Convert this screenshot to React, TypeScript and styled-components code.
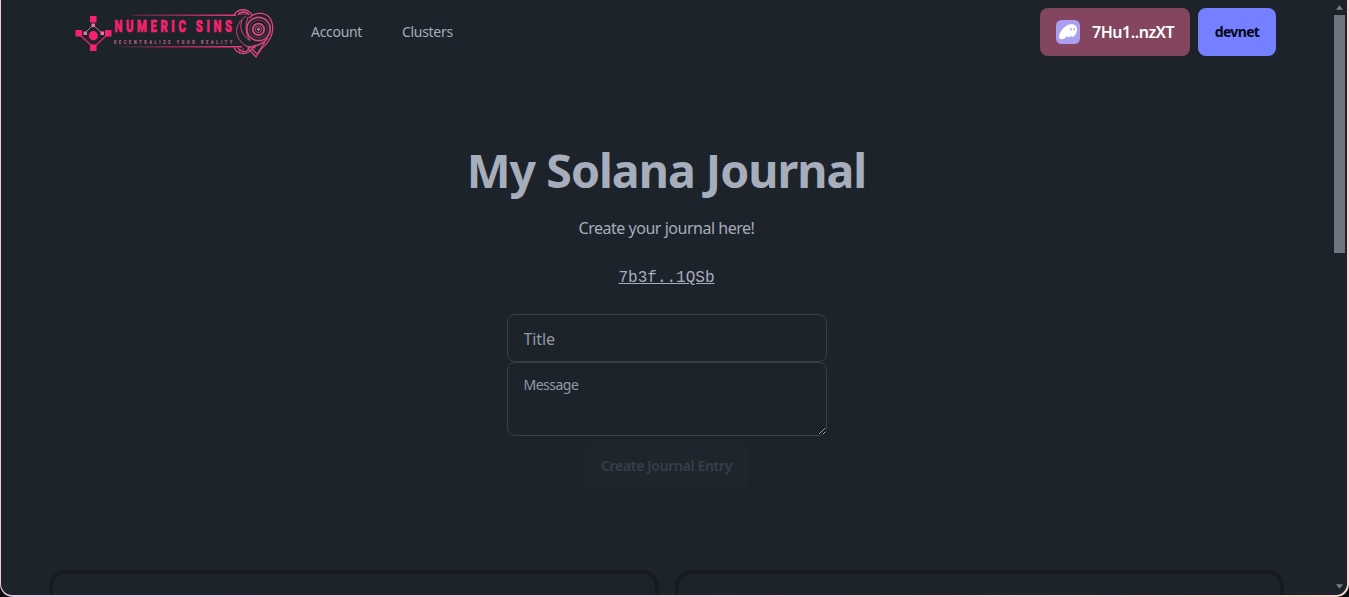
import React from 'react';
import styled, { createGlobalStyle } from 'styled-components';

const Global = createGlobalStyle`
  *, *::before, *::after { box-sizing: border-box; }
  html, body { margin: 0; background: #0b0a0d; }
  body { font-family: "Noto Sans", "Open Sans", sans-serif; color: #a6adbb; overflow: hidden; }
`;
const Frame = styled.div`
  height: 597px;
  padding: 0 2px 2px 1px;
  border-radius: 0 0 13px 13px;
  background: linear-gradient(90deg, #e9c9e4, #f0c9d8 50%, #f8d4cc);
  overflow: hidden;
`;
const Viewport = styled.div`
  height: 595px;
  display: flex;
  background: #1d232a;
  border-radius: 0 0 11px 11px;
  overflow: hidden;
`;
const Page = styled.div`
  flex: 1;
  min-width: 0;
  display: flex;
  flex-direction: column;
`;
const Scrollbar = styled.div`
  width: 15px;
  flex: none;
  display: flex;
  flex-direction: column;
  justify-content: space-between;
  align-items: center;
  padding: 5px 2px 6px 2px;
`;
const Thumb = styled.div`
  width: 11px;
  height: 238px;
  margin: 5px 0 auto;
  background: #6f7480;
`;
const Header = styled.header`
  height: 64px;
  flex: none;
  display: flex;
  align-items: center;
  justify-content: space-between;
  padding: 0 56px 0 71px;
`;
const Row = styled.div<{ $gap: number }>`
  display: flex;
  align-items: center;
  gap: ${p => p.$gap}px;
`;
const NavLink = styled.a<{ $width: number }>`
  width: ${p => p.$width}px;
  font-size: 14px;
  line-height: 20px;
  letter-spacing: -0.3px;
  white-space: nowrap;
`;
const Wallet = styled.button`
  width: 150px;
  height: 48px;
  display: flex;
  align-items: center;
  gap: 12px;
  padding: 0 0 0 16px;
  border: 0;
  border-radius: 8px;
  background: #84465f;
  color: #fff;
  font: 600 16px "Noto Sans", sans-serif;
  letter-spacing: -0.45px;
`;
const Cluster = styled.button`
  width: 78px;
  height: 48px;
  padding: 0 0 1px;
  border: 0;
  border-radius: 8px;
  background: #7480ff;
  color: #050617;
  font: 700 14px "Noto Sans", sans-serif;
  letter-spacing: -0.65px;
`;
const Hero = styled.main`
  height: 506px;
  flex: none;
  display: flex;
  flex-direction: column;
  align-items: center;
  padding-top: 82px;
`;
const Title = styled.h1`
  margin: 0;
  font-size: 46.5px;
  line-height: 48px;
  font-weight: 700;
  letter-spacing: -1px;
  white-space: nowrap;
`;
const Lead = styled.p`
  margin: 22px 0 0;
  font-size: 16px;
  line-height: 24px;
  letter-spacing: -0.48px;
`;
const Address = styled.a`
  margin-top: 26px;
  font: 16px/24px "Liberation Mono", monospace;
  text-decoration: underline;
`;
const Form = styled.form`
  margin-top: 24px;
  display: flex;
  flex-direction: column;
  align-items: center;
`;
const Input = styled.input`
  width: 320px;
  height: 48px;
  padding: 2px 16px 0;
  border: 1px solid #383f47;
  border-radius: 8px;
  background: transparent;
  font: 16px "Noto Sans", sans-serif;
  letter-spacing: -0.1px;
  &::placeholder { color: #9299a5; opacity: 1; }
`;
const TextArea = styled.textarea`
  display: block;
  width: 320px;
  height: 74px;
  padding: 12px 16px 8px;
  border: 1px solid #383f47;
  border-radius: 8px;
  background: transparent;
  color-scheme: dark;
  font: 14px/20px "Noto Sans", sans-serif;
  letter-spacing: -0.5px;
  &::placeholder { color: #9299a5; opacity: 1; }
`;
const Submit = styled.button`
  width: 165px;
  height: 48px;
  margin-top: 6px;
  padding: 0 0 1px;
  border: 0;
  border-radius: 8px;
  background: #1f252d;
  color: #373e47;
  font: 600 14px "Noto Sans", sans-serif;
  letter-spacing: -0.32px;
`;
const Cards = styled.div`
  display: grid;
  grid-template-columns: 610px 609px;
  gap: 16px;
  padding-left: 48px;
`;
const Card = styled.article`
  height: 100px;
  border: 4px solid #171b20;
  border-radius: 16px;
`;

const Logo = () => (
  <svg width="204" height="56" viewBox="72 4 204 56" fill="none">
    <defs>
      <linearGradient id="rule" x1="115" x2="240" y1="0" y2="0" gradientUnits="userSpaceOnUse">
        <stop stopColor="#ee2a75" stopOpacity="0" />
        <stop offset=".6" stopColor="#a52a5c" />
        <stop offset="1" stopColor="#f23a80" />
      </linearGradient>
    </defs>
    <path d="m80 35 12 11h3l12-11" stroke="#e0246c" strokeWidth="1.3" />
    <path d="m93 25-8 8m8-8 9 8" stroke="#d76b9a" />
    <g fill="#f5226f">
      <path d="M90 16h6.500v6.500H90zM75.500 30h6.500v6.500h-6.500zM105 30h6.500v6.500H105zM90 44.500h6.500V51H90z" />
      <circle cx="93.300" cy="35.700" r="4.600" />
    </g>
    <path d="M91.500 23.500h3.500v3.500h-3.500zM83.500 31.500h3.500V35h-3.500zM100.500 31.500h3.500V35h-3.500z" fill="#e673a6" />
    <path d="M132 15.300h104M118 46.700h124" stroke="url(#rule)" strokeWidth="1.600" />
    <g transform="translate(114.500 31.500) scale(.66 1)">
      <text fontFamily="Roboto" fontWeight="900" fontSize="17" textLength="178" fill="#f5226f" stroke="#f5226f" strokeWidth=".6">NUMERIC SINS</text>
    </g>
    <g transform="translate(114 44) scale(.6 1)">
      <text fontFamily="Roboto" fontWeight="900" fontSize="6" textLength="197" fill="#d0628f">DECENTRALIZE YOUR REALITY</text>
    </g>
    <g stroke="#d94680">
      <path d="M234 15c4-7 14-7 18 0M238 15c3-4 8-4 11 0M234 47.500c4 8 14 8 18 1M238 48c3 5 8 5 11 1" strokeWidth="1.300" />
      <path d="M243 11v4m-4-3 2 3m6-3-2 3M243 48v5m-4-1 2-3" strokeWidth=".8" />
      <path d="M246 16c-13 9-12 22 0 30l10 2M242 20c-3 8 0 15 7 20M248 17q-5 13 2 24" />
      <path d="M249 18c7-7 18-6 22 2 4 9 1 20-9 28l-6 9-8-9 8-3" strokeWidth="1.300" />
      <path d="M268 38q-5 6-13 8l-3 3 5 5M265 42l-8 12" strokeWidth="1.300" />
      <circle cx="258.500" cy="29" r="11.700" strokeWidth="1.700" />
      <circle cx="258.500" cy="29" r="9" stroke="#9b3762" strokeWidth=".7" />
      <circle cx="258.500" cy="29.300" r="5.700" strokeWidth="1.800" />
      <circle cx="258.500" cy="29.300" r="3.200" stroke="#b2497b" />
      <circle cx="258.500" cy="29.300" r="1" fill="#ef79aa" stroke="#ef79aa" />
    </g>
  </svg>
);
const Ghost = () => (
  <svg width="24" height="24" viewBox="0 0 24 24">
    <rect width="24" height="24" rx="5.500" fill="#ab9ff2" />
    <path d="M10.800 16.200c-1 1.500-2.700 3-5 3-1.500 0-2.800-.6-2.800-2.300C3 12 9 4.200 15.500 4.200c3.700 0 5.500 2.500 5.500 5.300 0 3.600-2.300 7.500-4.700 7.500-.8 0-1.200-.5-1.200-1.200-.7.800-1.500 1.400-2.400 1.400-.8 0-1.500-.3-1.900-1Z" fill="#fff" />
    <ellipse cx="15" cy="9.300" rx=".75" ry="1.300" fill="#ab9ff2" />
    <ellipse cx="18.200" cy="9.300" rx=".75" ry="1.300" fill="#ab9ff2" />
  </svg>
);
const Arrow = ({ down = false }: { down?: boolean }) => (
  <svg width="7" height="5" viewBox="0 0 8 5">
    <path d={down ? 'M0 0h8L4 5Z' : 'M0 5h8L4 0Z'} fill="#7a7e87" />
  </svg>
);

export default function App() {
  return (
    <>
      <Global />
      <Frame>
        <Viewport>
          <Page>
            <Header>
              <Row $gap={35}>
                <Logo />
                <Row $gap={40}>
                  <NavLink $width={51}>Account</NavLink>
                  <NavLink $width={52}>Clusters</NavLink>
                </Row>
              </Row>
              <Row $gap={8}>
                <Wallet type="button"><Ghost />7Hu1..nzXT</Wallet>
                <Cluster type="button">devnet</Cluster>
              </Row>
            </Header>
            <Hero>
              <Title>My Solana Journal</Title>
              <Lead>Create your journal here!</Lead>
              <Address>7b3f..1QSb</Address>
              <Form>
                <Input placeholder="Title" />
                <TextArea placeholder="Message" />
                <Submit type="button" disabled>Create Journal Entry</Submit>
              </Form>
            </Hero>
            <Cards><Card /><Card /></Cards>
          </Page>
          <Scrollbar><Arrow /><Thumb /><Arrow down /></Scrollbar>
        </Viewport>
      </Frame>
    </>
  );
}
